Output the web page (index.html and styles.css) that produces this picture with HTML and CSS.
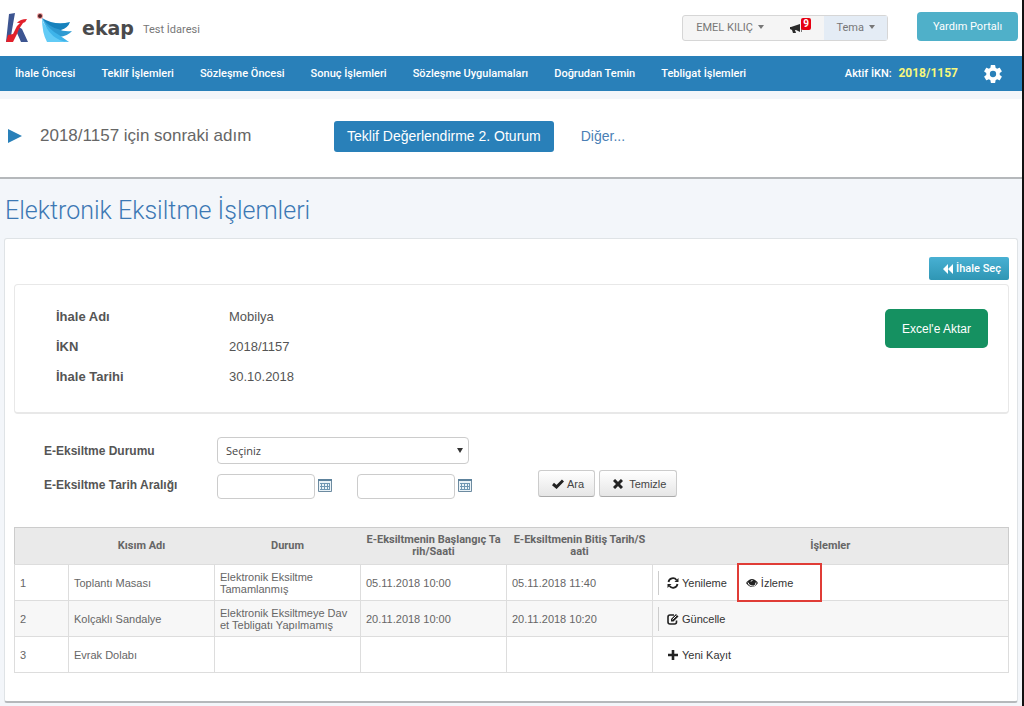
FILE: index.html
```html
<!DOCTYPE html>
<html lang="tr">
<head>
<meta charset="utf-8">
<title>EKAP - Elektronik Eksiltme İşlemleri</title>
<link rel="stylesheet" href="styles.css">
</head>
<body>
<header class="top">
  <svg class="logo-k" width="24" height="30" viewBox="0 0 24 30" aria-hidden="true">
    <path fill="#3d5591" d="M4 1l6-1-3 17-2 12H1zM14 14l3 2 6 13h-7l-4-9z"/>
    <path fill="#e2202b" d="M12 10q3-4 10-4-1 3-4 4l-4 6-2 5-4 8H1l2-7 5-1 4-8 3-3z"/>
  </svg>
  <svg class="logo-bird" width="36" height="32" viewBox="0 0 36 32" aria-hidden="true">
    <path fill="#1682bd" d="M5 6Q18 14 33 10q-2 6-9 8l-9 2z"/>
    <path fill="#2d9ad2" d="M5 6q7 9 16 11 6 3 14 2-4 5-13 6l-9-4z"/>
    <path fill="#62cbf6" d="M5 6q2 10 13 16 6 7 14 8H10Q5 21 5 6z"/>
    <path fill="#3eb4ea" d="M5 6q7 12 17 17l10 7Q13 29 5 6z"/>
    <circle cx="3" cy="4" r="3" fill="#f0a0a0"/><circle cx="3" cy="4" r="2" fill="#502126"/>
  </svg>
  <span class="brand">ekap</span>
  <span class="org">Test İdaresi</span>
  <div class="userbar">
    <button class="user" type="button">EMEL KILIÇ <span class="caret"></span></button>
    <button class="horn" type="button" aria-label="Duyurular">
      <svg width="13" height="12" viewBox="0 0 13 12"><path fill="#2b2b2b" d="M0 5h1l3-1 6-2v8L6 8H5l1 3H3L2 8 0 7z"/><path fill="#777" d="M11 2h1v8h-1z"/></svg>
      <span class="badge">9</span>
    </button>
    <button class="theme" type="button">Tema <span class="caret"></span></button>
  </div>
  <button class="help" type="button">Yardım Portalı</button>
</header>
<nav class="nav">
  <a href="#">İhale Öncesi</a><a href="#">Teklif İşlemleri</a><a href="#">Sözleşme Öncesi</a><a href="#">Sonuç İşlemleri</a><a href="#">Sözleşme Uygulamaları</a><a href="#">Doğrudan Temin</a><a href="#">Tebligat İşlemleri</a>
  <span class="active">Aktif İKN: <b>2018/1157</b></span>
  <button class="gear" type="button" aria-label="Ayarlar"><svg width="18" height="18" viewBox="2 2 20 20"><path fill="#fff" d="M19.43 12.98c.04-.32.07-.64.07-.98s-.03-.66-.07-.98l2.11-1.65c.19-.15.24-.42.12-.64l-2-3.46c-.12-.22-.39-.3-.61-.22l-2.49 1c-.52-.4-1.08-.73-1.69-.98l-.38-2.65A.49.49 0 0 0 14 2h-4c-.25 0-.46.18-.49.42l-.38 2.65c-.61.25-1.17.59-1.69.98l-2.49-1c-.23-.09-.49 0-.61.22l-2 3.46c-.13.22-.07.49.12.64l2.11 1.65c-.04.32-.07.65-.07.98s.03.66.07.98l-2.11 1.65c-.19.15-.24.42-.12.64l2 3.46c.12.22.39.3.61.22l2.49-1c.52.4 1.08.73 1.69.98l.38 2.65c.03.24.24.42.49.42h4c.25 0 .46-.18.49-.42l.38-2.65c.61-.25 1.17-.59 1.69-.98l2.49 1c.23.09.49 0 .61-.22l2-3.46c.12-.22.07-.49-.12-.64zM12 15.5a3.5 3.5 0 1 1 0-7 3.5 3.5 0 0 1 0 7z"/></svg></button>
</nav>
<section class="step">
  <svg width="14" height="14" viewBox="0 0 14 14" aria-hidden="true"><path fill="#2980b9" d="M0 0l14 7-14 7z"/></svg>
  <span class="step-text">2018/1157 için sonraki adım</span>
  <button class="step-btn" type="button">Teklif Değerlendirme 2. Oturum</button>
  <a class="other" href="#">Diğer...</a>
</section>
<h1>Elektronik Eksiltme İşlemleri</h1>
<main class="card">
  <div class="tools">
    <button class="pick" type="button"><svg width="10" height="10" viewBox="0 0 10 10" aria-hidden="true"><path fill="#fff" d="M0 5l5-5v10zM5 5l5-5v10z"/></svg>İhale Seç</button>
  </div>
  <section class="info">
    <dl>
      <dt>İhale Adı</dt><dd>Mobilya</dd>
      <dt>İKN</dt><dd>2018/1157</dd>
      <dt>İhale Tarihi</dt><dd>30.10.2018</dd>
    </dl>
    <button class="excel" type="button">Excel'e Aktar</button>
  </section>
  <form class="filter">
    <label for="durum">E-Eksiltme Durumu</label>
    <div class="select-wrap"><select id="durum"><option>Seçiniz</option></select></div>
    <label for="bas">E-Eksiltme Tarih Aralığı</label>
    <div class="dates">
      <input id="bas" type="text">
      <button class="cal" type="button" aria-label="Başlangıç tarihi seç"><svg width="14" height="13" viewBox="0 0 14 13"><path fill="#eaf3f8" stroke="#6d8ba0" d="M.5.5h13v12H.5z"/><path fill="#5d829c" d="M0 0h14v2H0z"/><path stroke="#6f97b3" d="M2 4.500h10M2 7.500h10M2 10.500h10M3.500 4v7M6.500 4v7M9.500 4v7M11.500 4v7"/></svg></button>
      <input id="bit" type="text" aria-label="Bitiş tarihi">
      <button class="cal" type="button" aria-label="Bitiş tarihi seç"><svg width="14" height="13" viewBox="0 0 14 13"><path fill="#eaf3f8" stroke="#6d8ba0" d="M.5.5h13v12H.5z"/><path fill="#5d829c" d="M0 0h14v2H0z"/><path stroke="#6f97b3" d="M2 4.500h10M2 7.500h10M2 10.500h10M3.500 4v7M6.500 4v7M9.500 4v7M11.500 4v7"/></svg></button>
      <div class="actions">
        <button class="btn" type="button"><svg width="12" height="10" viewBox="0 0 12 10" aria-hidden="true"><path fill="none" stroke="#222" stroke-width="3" d="M1 5l3.500 3L11 1.500"/></svg>Ara</button>
        <button class="btn clear" type="button"><svg width="10" height="10" viewBox="0 0 10 10" aria-hidden="true"><path fill="none" stroke="#222" stroke-width="3" d="M1 1l8 8M9 1L1 9"/></svg>Temizle</button>
      </div>
    </div>
  </form>
  <table>
    <colgroup><col class="c-no"><col class="c"><col class="c"><col class="c"><col class="c"><col></colgroup>
    <thead><tr><th></th><th>Kısım Adı</th><th>Durum</th><th>E-Eksiltmenin Başlangıç Ta<br>rih/Saati</th><th>E-Eksiltmenin Bitiş Tarih/S<br>aati</th><th>İşlemler</th></tr></thead>
    <tbody>
      <tr><td>1</td><td>Toplantı Masası</td><td>Elektronik Eksiltme<br>Tamamlanmış</td><td>05.11.2018 10:00</td><td>05.11.2018 11:40</td>
        <td><div class="ops"><i class="bar"></i>
          <a href="#"><svg width="12" height="12" viewBox="0 0 12 12" aria-hidden="true"><path fill="none" stroke="#222" stroke-width="1.800" d="M1.500 5A4.500 4.500 0 0 1 9.500 3M10.500 7A4.500 4.500 0 0 1 2.500 9"/><path fill="#222" d="M11.500 1v4h-4zM.5 11V7h4z"/></svg>Yenileme</a>
          <a class="marked" href="#"><svg width="12" height="10" viewBox="0 0 12 10" aria-hidden="true"><path fill="#222" d="M0 5Q6-3 12 5 6 13 0 5z"/><path fill="none" stroke="#fff" d="M2 4.500Q2.500 7.500 6 8T10 4.500M5 3.500q0-1 1.500-1"/></svg>İzleme</a></div></td></tr>
      <tr><td>2</td><td>Kolçaklı Sandalye</td><td>Elektronik Eksiltmeye Dav<br>et Tebligatı Yapılmamış</td><td>20.11.2018 10:00</td><td>20.11.2018 10:20</td>
        <td><div class="ops"><i class="bar"></i><a href="#"><svg width="12" height="12" viewBox="0 0 12 12" aria-hidden="true"><path fill="none" stroke="#222" stroke-width="1.600" d="M7 2H3Q1 2 1 4v5q0 2 2 2h4.500q2 0 2-2V7.500"/><path fill="#222" d="M4 8.500V6l5-5 2.500 2.500-5 5z"/><path stroke="#fff" d="M5.500 6.500l4-4"/></svg>Güncelle</a></div></td></tr>
      <tr><td>3</td><td>Evrak Dolabı</td><td></td><td></td><td></td>
        <td><div class="ops"><i class="bar none"></i><a href="#"><svg width="12" height="10" viewBox="0 0 12 10" aria-hidden="true"><path stroke="#222" stroke-width="2.600" d="M1 5h10M6 0v10"/></svg>Yeni Kayıt</a></div></td></tr>
    </tbody>
  </table>
</main>
</body>
</html>
```
FILE: styles.css
```css
* { box-sizing: border-box; }
body {
  margin: 0;
  min-height: 100vh;
  border-right: 2px solid #111;
  background: #f3f6fa;
  color: #555;
  font: 12px/14px Roboto, "Liberation Sans", sans-serif;
}
button { padding: 0; border: 0; background: none; font: inherit; color: inherit; cursor: pointer; }
a { color: inherit; text-decoration: none; }
svg { display: block; flex: none; }

.top { display: flex; align-items: center; height: 56px; padding: 0 4px 0 5px; background: #fff; }
.logo-bird { margin-left: 8px; }
.brand { margin-left: 9px; font: bold 19px/24px "DejaVu Sans", sans-serif; color: #4a4a4c; }
.org { margin: 4px 0 0 9px; font-size: 11px; color: #777; }
.userbar { display: flex; align-items: stretch; width: 206px; height: 26px; margin-left: auto; border: 1px solid #d6d6d6; border-radius: 3px; background: #f5f5f5; color: #777; font-size: 11px; }
.user { width: 94px; }
.horn { display: flex; align-items: center; width: 47px; padding-left: 13px; position: relative; }
.badge { position: absolute; top: 2px; left: 24px; width: 10px; height: 12px; border-radius: 2px; background: #e60012; color: #fff; font: bold 10px/12px Roboto, sans-serif; }
.theme { flex: 1; background: #e4ecf5; }
.caret { display: inline-block; margin-left: 2px; border: 3px solid transparent; border-top: 4px solid #777; border-bottom: 0; vertical-align: 2px; }
.help { width: 101px; height: 29px; margin: 0 0 3px 29px; border-radius: 4px; background: #4fb0c9; color: #fff; font-size: 11px; }

.nav { display: flex; align-items: center; gap: 26px; height: 35px; padding: 0 20px 0 15px; background: #2980b9; color: #fff; font-size: 11px; font-weight: 500; }
.active { margin-left: auto; }
.active b { margin-left: 4px; color: #f7f77c; font-size: 12px; }

.step { display: flex; align-items: center; height: 80px; margin-top: 8px; padding: 0 8px 4px; border-bottom: 2px solid #b5b8bb; background: #fff; font: 17px/20px "Liberation Sans", Arial, sans-serif; color: #666; }
.step-text { width: 294px; margin-left: 18px; }
.step-btn { height: 31px; padding: 0 13px; border-radius: 3px; background: #2980b9; color: #fff; font-size: 14px; }
.other { margin-left: 27px; font-size: 14px; color: #4a7fb5; }

h1 { margin: 16px 5px 12px; font: 300 25px/31px Roboto, sans-serif; color: #3c78b4; }
.card { margin: 0 4px 3px; padding: 18px 8px 28px 9px; border: 1px solid #dfe3e6; border-bottom: 2px solid #b5b8bb; border-radius: 3px; background: #fff; }
.tools { display: flex; justify-content: flex-end; }
.pick { display: flex; align-items: center; justify-content: center; gap: 3px; width: 80px; height: 23px; padding-left: 6px; border-radius: 2px; background: linear-gradient(#48b0d3, #2f96b4); color: #fff; font-size: 11px; font-weight: 500; }

.info { display: flex; justify-content: space-between; align-items: flex-start; margin-top: 4px; padding: 24px 20px 28px 41px; border: 1px solid #e8e8e8; border-bottom-width: 2px; border-radius: 4px; }
.info dl { display: grid; grid-template-columns: 173px auto; row-gap: 16px; margin: 1px 0 0; font: 13px/14px "Liberation Sans", Arial, sans-serif; }
.info dt { font-weight: bold; }
.info dd { margin: 0; }
.excel { width: 103px; height: 39px; border-radius: 5px; background: #159161; color: #fff; font: 12px/14px "Liberation Sans", Arial, sans-serif; }

.filter { display: grid; grid-template-columns: 173px 1fr; align-items: center; row-gap: 6px; padding: 23px 0 0 30px; }
.filter label { font: bold 12px/14px "Liberation Sans", Arial, sans-serif; }
.select-wrap { position: relative; width: 252px; }
.select-wrap::after { content: ""; position: absolute; right: 6px; top: 11px; border: 3px solid transparent; border-top: 5px solid #333; border-bottom: 0; }
select { display: block; width: 100%; height: 27px; padding: 0 8px; border: 1px solid #ccc; border-radius: 4px; background: #fff; appearance: none; color: #444; font: 11px/14px "Open Sans", sans-serif; }
.dates { display: flex; align-items: flex-end; height: 29px; }
.dates input { width: 98px; height: 25px; border: 1px solid #ccc; border-radius: 4px; }
.cal { margin: 0 0 7px 3px; }
.cal + input { margin-left: 25px; }
.actions { display: flex; align-self: flex-start; gap: 4px; margin-left: 66px; }
.btn { display: flex; align-items: center; gap: 3px; height: 27px; padding: 0 10px 0 13px; border: 1px solid #ccc; border-bottom-color: #aaa; border-radius: 3px; background: linear-gradient(#fff, #e6e6e6); color: #444; font: 11px/14px "Liberation Sans", Arial, sans-serif; }
.clear { gap: 6px; }

table { width: 100%; margin-top: 28px; border-collapse: collapse; table-layout: fixed; border: 1px solid #ccc; color: #666; font: 11px/12px "Liberation Sans", Arial, sans-serif; }
.c-no { width: 54px; }
.c { width: 146px; }
th { height: 37px; padding: 0; border-top: 1px solid #ccc; background: #eaeaea; color: #666; font-family: Roboto, sans-serif; }
td { height: 36px; padding: 0 5px; border: 1px solid #ddd; }
tr:nth-child(2) td { background: #f7f7f7; }
.ops { display: flex; align-items: center; color: #333; }
.bar { width: 1px; height: 24px; margin-right: 8px; background: #ccc; }
.bar.none { visibility: hidden; }
.ops a { display: flex; align-items: center; gap: 3px; }
.ops .marked { width: 85px; height: 39px; margin: -2px 0 -2px 10px; padding-left: 7px; border: 2px solid #e03c36; }
```
